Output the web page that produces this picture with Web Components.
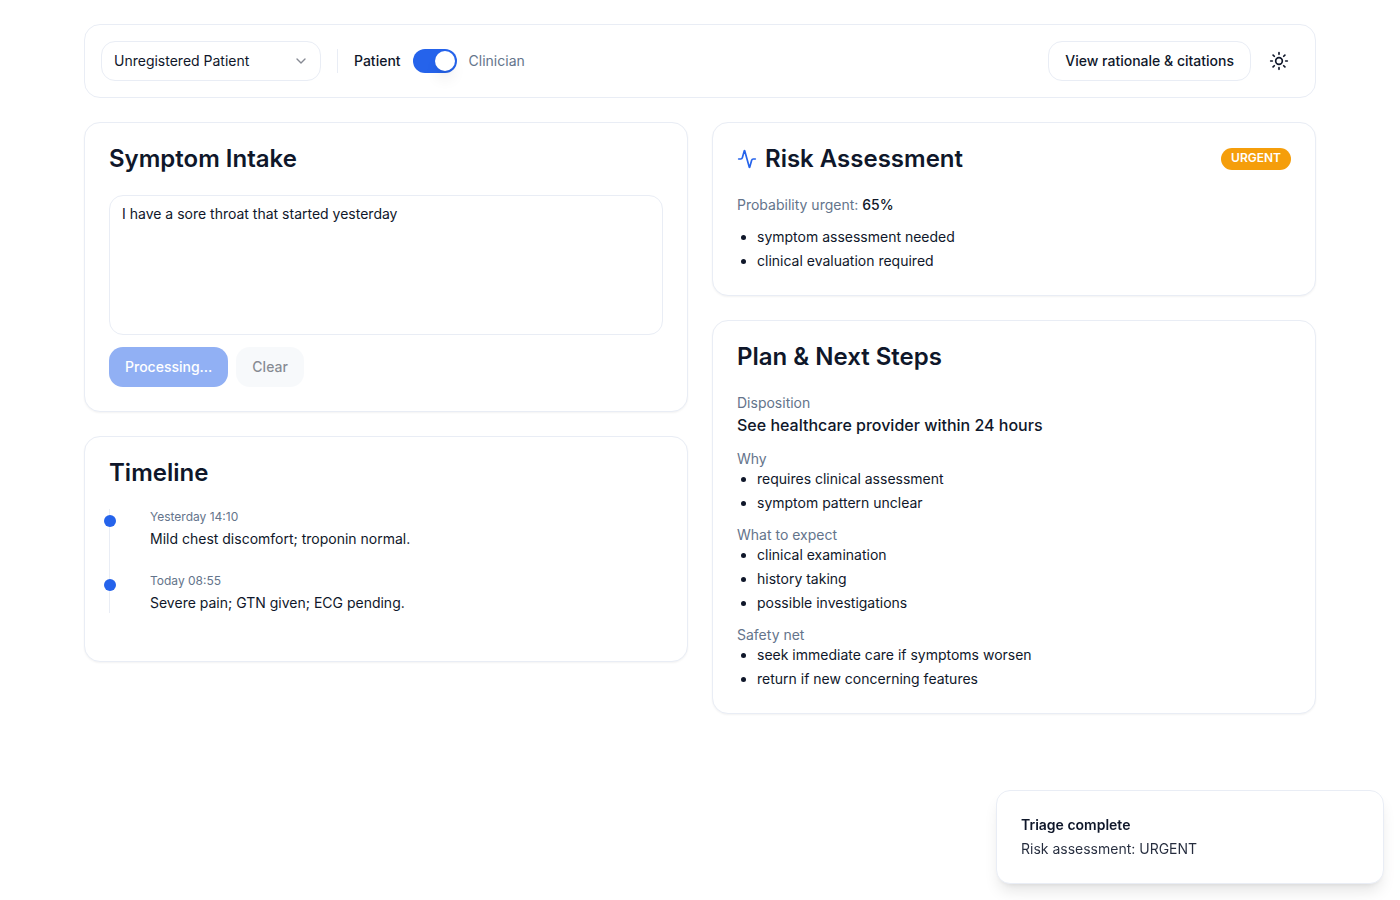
<!DOCTYPE html>
<html lang="en">
<head>
<meta charset="utf-8">
<meta name="viewport" content="width=device-width, initial-scale=1">
<title>Triage Assistant</title>
<style>
  :root {
    --fg: #0f172a;
    --muted: #64748b;
    --border: #e9edf5;
    --primary: #2563eb;
    --secondary: #f1f5f9;
    --surface: #ffffff;
    --urgent: #f59e0b;
    --radius: 16px;
    --radius-control: 14px;
  }
  * { box-sizing: border-box; }
  body {
    margin: 0;
    background: var(--surface);
    color: var(--fg);
    font: 14px/20px Inter, "Liberation Sans", sans-serif;
  }
</style>
</head>
<body>
<triage-app>
  <app-toolbar slot="toolbar"></app-toolbar>

  <info-card slot="left" heading="Symptom Intake">
    <symptom-form></symptom-form>
  </info-card>
  <info-card slot="left" heading="Timeline">
    <time-line>
      <timeline-event when="Yesterday 14:10">Mild chest discomfort; troponin normal.</timeline-event>
      <timeline-event when="Today 08:55">Severe pain; GTN given; ECG pending.</timeline-event>
    </time-line>
  </info-card>

  <info-card slot="right" heading="Risk Assessment">
    <activity-icon slot="icon"></activity-icon>
    <status-badge slot="badge">URGENT</status-badge>
    <risk-summary probability="65%">
      <bullet-list items="symptom assessment needed|clinical evaluation required"></bullet-list>
    </risk-summary>
  </info-card>
  <info-card slot="right" heading="Plan &amp; Next Steps">
    <plan-section label="Disposition"><plan-disposition>See healthcare provider within 24 hours</plan-disposition></plan-section>
    <plan-section label="Why"><bullet-list items="requires clinical assessment|symptom pattern unclear"></bullet-list></plan-section>
    <plan-section label="What to expect"><bullet-list items="clinical examination|history taking|possible investigations"></bullet-list></plan-section>
    <plan-section label="Safety net"><bullet-list items="seek immediate care if symptoms worsen|return if new concerning features"></bullet-list></plan-section>
  </info-card>

  <toast-message slot="toast" heading="Triage complete">Risk assessment: URGENT</toast-message>
</triage-app>

<script>
  const BASE = `<style>
    *, *::before, *::after { box-sizing: border-box; }
    :host { display: block; }
    :host([hidden]) { display: none; }
    button, select, textarea { font: inherit; color: inherit; margin: 0; }
    h2, h3, p, ul, ol { margin: 0; padding: 0; }
  </style>`;

  class BaseElement extends HTMLElement {
    constructor() {
      super();
      this.attachShadow({ mode: "open" });
    }
    connectedCallback() {
      this.shadowRoot.innerHTML = BASE + this.render();
    }
    text(name) {
      const span = document.createElement("span");
      span.textContent = this.getAttribute(name) || "";
      return span.innerHTML;
    }
  }

  customElements.define("triage-app", class extends BaseElement {
    render() {
      return `<style>
        main { max-width: 1280px; margin: 0 auto; padding: 24px; display: grid; gap: 24px; }
        .columns { display: grid; grid-template-columns: repeat(2, minmax(0, 1fr)); gap: 24px; align-items: start; }
        .column { display: grid; gap: 24px; }
        .toasts { position: fixed; right: 0; bottom: 0; width: 100%; max-width: 420px; padding: 16px; }
        @media (max-width: 800px) { .columns { grid-template-columns: minmax(0, 1fr); } }
      </style>
      <main>
        <slot name="toolbar"></slot>
        <div class="columns">
          <div class="column"><slot name="left"></slot></div>
          <div class="column"><slot name="right"></slot></div>
        </div>
      </main>
      <div class="toasts"><slot name="toast"></slot></div>`;
    }
  });

  customElements.define("app-toolbar", class extends BaseElement {
    render() {
      return `<style>
        header {
          display: flex; flex-wrap: wrap; align-items: center; justify-content: space-between; gap: 16px;
          padding: 16px; border: 1px solid var(--border); border-radius: var(--radius);
        }
        .group { display: flex; align-items: center; gap: 16px; }
        .actions { display: flex; align-items: center; gap: 8px; }
        .divider { width: 1px; height: 24px; background: var(--border); }
      </style>
      <header>
        <div class="group">
          <patient-select></patient-select>
          <span class="divider"></span>
          <mode-switch></mode-switch>
        </div>
        <div class="actions">
          <ui-button variant="outline">View rationale &amp; citations</ui-button>
          <theme-toggle></theme-toggle>
        </div>
      </header>`;
    }
  });

  customElements.define("patient-select", class extends BaseElement {
    render() {
      return `<style>
        :host { width: 220px; }
        .field { display: grid; align-items: center; }
        .field > * { grid-area: 1 / 1; }
        select {
          appearance: none; width: 100%; height: 40px; padding: 0 36px 0 12px;
          background: var(--surface); border: 1px solid var(--border); border-radius: var(--radius-control);
        }
        svg { justify-self: end; margin-right: 12px; color: var(--fg); opacity: .5; pointer-events: none; }
      </style>
      <div class="field">
        <select aria-label="Patient record"><option>Unregistered Patient</option></select>
        <svg width="16" height="16" viewBox="0 0 24 24" fill="none" stroke="currentColor" stroke-width="2" stroke-linecap="round" stroke-linejoin="round"><path d="m6 9 6 6 6-6"/></svg>
      </div>`;
    }
  });

  customElements.define("mode-switch", class extends BaseElement {
    render() {
      return `<style>
        :host { display: flex; align-items: center; gap: 12px; }
        .on { font-weight: 500; }
        .off { color: var(--muted); }
        input {
          appearance: none; display: flex; margin: 0; width: 44px; height: 24px; padding: 2px;
          border-radius: 12px; background: #cbd5e1; cursor: pointer;
        }
        input::before {
          content: ""; width: 20px; height: 20px; border-radius: 50%; background: #fff;
          box-shadow: 0 10px 15px -3px rgb(0 0 0 / .1), 0 4px 6px -4px rgb(0 0 0 / .1);
        }
        input:checked { background: var(--primary); justify-content: flex-end; }
      </style>
      <label class="on" for="mode">Patient</label>
      <input id="mode" type="checkbox" role="switch" checked>
      <label class="off" for="mode">Clinician</label>`;
    }
  });

  customElements.define("ui-button", class extends BaseElement {
    render() {
      const disabled = this.hasAttribute("disabled") ? "disabled" : "";
      return `<style>
        button {
          display: flex; align-items: center; justify-content: center; height: 40px; padding: 0 16px;
          border: 0; border-radius: var(--radius-control); font-weight: 500; white-space: nowrap; cursor: pointer;
        }
        button:disabled { opacity: .5; cursor: default; }
        :host([variant="outline"]) button { background: var(--surface); border: 1px solid var(--border); }
        :host([variant="primary"]) button { background: var(--primary); color: #fff; }
        :host([variant="secondary"]) button { background: var(--secondary); }
      </style>
      <button type="button" ${disabled}><slot></slot></button>`;
    }
  });

  customElements.define("theme-toggle", class extends BaseElement {
    render() {
      return `<style>
        button {
          display: grid; place-items: center; width: 40px; height: 40px; padding: 0;
          background: none; border: 0; border-radius: var(--radius-control); cursor: pointer;
        }
      </style>
      <button type="button" aria-label="Toggle theme">
        <svg width="20" height="20" viewBox="0 0 24 24" fill="none" stroke="currentColor" stroke-width="2" stroke-linecap="round" stroke-linejoin="round"><circle cx="12" cy="12" r="4"/><path d="M12 2v2M12 20v2M4.93 4.93l1.41 1.41M17.66 17.66l1.41 1.41M2 12h2M20 12h2M6.34 17.66l-1.41 1.41M19.07 4.93l-1.41 1.41"/></svg>
      </button>`;
    }
  });

  customElements.define("info-card", class extends BaseElement {
    render() {
      return `<style>
        section {
          padding: 24px; background: var(--surface); border: 1px solid var(--border);
          border-radius: var(--radius); box-shadow: 0 1px 2px rgb(0 0 0 / .05);
        }
        header { display: flex; align-items: center; gap: 8px; height: 24px; margin-bottom: 24px; }
        h2 { flex: 1; font-size: 24px; line-height: 24px; font-weight: 600; }
        .body { display: grid; gap: 12px; }
      </style>
      <section>
        <header><slot name="icon"></slot><h2>${this.text("heading")}</h2><slot name="badge"></slot></header>
        <div class="body"><slot></slot></div>
      </section>`;
    }
  });

  customElements.define("symptom-form", class extends BaseElement {
    render() {
      return `<style>
        form { display: grid; gap: 12px; }
        textarea {
          display: block; width: 100%; height: 140px; padding: 8px 12px; resize: none;
          background: var(--surface); border: 1px solid var(--border); border-radius: var(--radius-control);
        }
        .actions { display: flex; gap: 8px; }
      </style>
      <form>
        <textarea aria-label="Symptoms">I have a sore throat that started yesterday</textarea>
        <div class="actions">
          <ui-button variant="primary" disabled>Processing...</ui-button>
          <ui-button variant="secondary" disabled>Clear</ui-button>
        </div>
      </form>`;
    }
  });

  customElements.define("time-line", class extends BaseElement {
    render() {
      return `<style>
        div { display: grid; gap: 24px; margin-bottom: 24px; border-left: 1px solid var(--border); }
      </style>
      <div role="list"><slot></slot></div>`;
    }
  });

  customElements.define("timeline-event", class extends BaseElement {
    connectedCallback() {
      super.connectedCallback();
      this.setAttribute("role", "listitem");
    }
    render() {
      return `<style>
        :host { position: relative; padding-left: 40px; }
        .dot { position: absolute; left: -6px; top: 6px; width: 12px; height: 12px; border-radius: 50%; background: var(--primary); }
        time { display: block; font-size: 12px; line-height: 16px; color: var(--muted); margin-bottom: 4px; }
      </style>
      <span class="dot"></span>
      <time>${this.text("when")}</time>
      <p><slot></slot></p>`;
    }
  });

  customElements.define("activity-icon", class extends BaseElement {
    render() {
      return `<style>svg { display: block; color: var(--primary); }</style>
      <svg width="20" height="20" viewBox="0 0 24 24" fill="none" stroke="currentColor" stroke-width="2" stroke-linecap="round" stroke-linejoin="round"><path d="M22 12h-2.48a2 2 0 0 0-1.93 1.46l-2.35 8.36a.25.25 0 0 1-.48 0L9.24 2.18a.25.25 0 0 0-.48 0l-2.35 8.36A2 2 0 0 1 4.49 12H2"/></svg>`;
    }
  });

  customElements.define("status-badge", class extends BaseElement {
    render() {
      return `<style>
        :host {
          padding: 2px 10px 4px; border-radius: 11px; background: var(--urgent); color: #fff;
          font-size: 12px; line-height: 16px; font-weight: 600;
        }
      </style><slot></slot>`;
    }
  });

  customElements.define("risk-summary", class extends BaseElement {
    render() {
      return `<style>
        :host { display: grid; gap: 12px; }
        p { color: var(--muted); }
        b { color: var(--fg); font-weight: 500; }
      </style>
      <p>Probability urgent: <b>${this.text("probability")}</b></p>
      <slot></slot>`;
    }
  });

  customElements.define("bullet-list", class extends BaseElement {
    render() {
      const items = this.text("items").split("|").map(t => `<li>${t}</li>`).join("");
      return `<style>
        ul { display: grid; gap: 4px; padding-left: 20px; list-style: disc; }
      </style><ul>${items}</ul>`;
    }
  });

  customElements.define("plan-section", class extends BaseElement {
    render() {
      return `<style>h3 { font-size: 14px; font-weight: 400; color: var(--muted); }</style>
      <h3>${this.text("label")}</h3><slot></slot>`;
    }
  });

  customElements.define("plan-disposition", class extends BaseElement {
    render() {
      return `<style>p { font-size: 16px; line-height: 24px; font-weight: 500; }</style><p><slot></slot></p>`;
    }
  });

  customElements.define("toast-message", class extends BaseElement {
    render() {
      return `<style>
        :host {
          padding: 24px; background: var(--surface); border: 1px solid var(--border); border-radius: var(--radius-control);
          box-shadow: 0 10px 15px -3px rgb(0 0 0 / .1), 0 4px 6px -4px rgb(0 0 0 / .1);
        }
        div { display: grid; gap: 4px; }
        strong { font-weight: 600; }
        p { opacity: .9; }
      </style>
      <div role="status"><strong>${this.text("heading")}</strong><p><slot></slot></p></div>`;
    }
  });
</script>
</body>
</html>
